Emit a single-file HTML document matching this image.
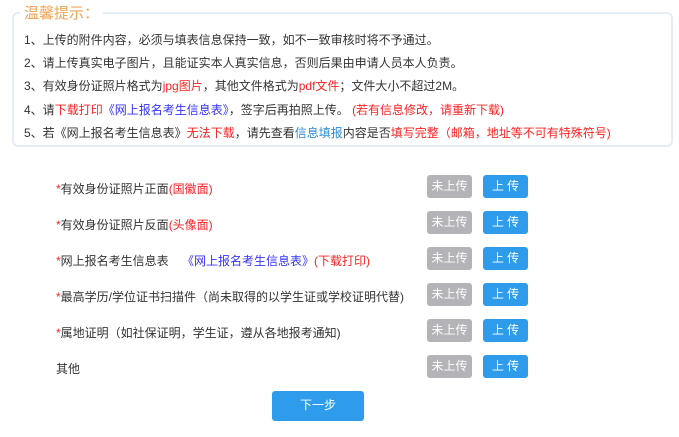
<!DOCTYPE html>
<html><head><meta charset="utf-8"><style>
body{margin:0;width:679px;height:437px;background:#fff;font-family:"Liberation Sans","Noto Sans CJK SC",sans-serif;color:#333;position:relative;overflow:hidden}
.box{position:absolute;left:12px;top:12px;width:661px;height:135px;border:2px solid #e3edf5;border-radius:6px;box-sizing:border-box}
.lg{position:absolute;left:20px;top:4px;background:#fff;padding:0 4px;color:#f0a55a;font-size:15px;line-height:20px}
.ln{position:absolute;left:24px;font-size:12px;line-height:16px;white-space:nowrap}
.r{color:#f22}.b{color:#33f}.t{color:#2a8ad8}
.row{position:absolute;left:56px;font-size:12px;line-height:16px;white-space:nowrap}
.g,.u{position:absolute;width:45px;height:23px;border-radius:3px;color:#fff;font-size:12px;line-height:23px;text-align:center}
.g{left:427px;background:#b3b3b8}.u{left:483px;background:#2e9cea}
.nx{position:absolute;left:272px;top:391px;width:92px;height:30px;background:#2e9cea;border-radius:3px;color:#fff;font-size:12px;line-height:28px;text-align:center}
</style></head><body>
<div class="box"></div>
<div class="lg">温馨提示：</div>
<div class="ln" style="top:32px">1、上传的附件内容，必须与填表信息保持一致，如不一致审核时将不予通过。</div>
<div class="ln" style="top:55px">2、请上传真实电子图片，且能证实本人真实信息，否则后果由申请人员本人负责。</div>
<div class="ln" style="top:78px">3、有效身份证照片格式为<span class="r">jpg图片</span>，其他文件格式为<span class="r">pdf文件</span>；文件大小不超过2M。</div>
<div class="ln" style="top:102px">4、请<span class="r">下载打印</span><span class="b">《网上报名考生信息表》</span>，签字后再拍照上传。 <span class="r">(若有信息修改，请重新下载)</span></div>
<div class="ln" style="top:125px">5、若《网上报名考生信息表》<span class="r">无法下载</span>，请先查看<span class="t">信息填报</span>内容是否<span class="r">填写完整</span><span class="r">（邮箱，地址等不可有特殊符号)</span></div>

<div class="row" style="top:181px"><span class="r">*</span>有效身份证照片正面<span class="r">(国徽面)</span></div>
<div class="row" style="top:217px"><span class="r">*</span>有效身份证照片反面<span class="r">(头像面)</span></div>
<div class="row" style="top:253px"><span class="r">*</span>网上报名考生信息表 &nbsp;&nbsp;&nbsp;<span class="b">《网上报名考生信息表》</span><span class="r">(下载打印)</span></div>
<div class="row" style="top:289px"><span class="r">*</span>最高学历/学位证书扫描件（尚未取得的以学生证或学校证明代替)</div>
<div class="row" style="top:325px"><span class="r">*</span>属地证明（如社保证明，学生证，遵从各地报考通知)</div>
<div class="row" style="top:361px">其他</div>

<div class="g" style="top:175px">未上传</div><div class="u" style="top:175px">上 传</div>
<div class="g" style="top:211px">未上传</div><div class="u" style="top:211px">上 传</div>
<div class="g" style="top:247px">未上传</div><div class="u" style="top:247px">上 传</div>
<div class="g" style="top:283px">未上传</div><div class="u" style="top:283px">上 传</div>
<div class="g" style="top:319px">未上传</div><div class="u" style="top:319px">上 传</div>
<div class="g" style="top:355px">未上传</div><div class="u" style="top:355px">上 传</div>
<div class="nx">下一步</div>
</body></html>
